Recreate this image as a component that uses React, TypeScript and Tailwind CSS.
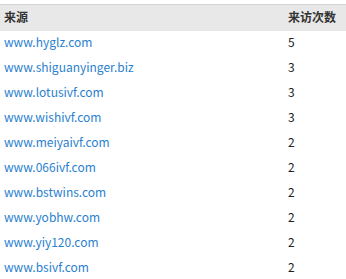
import React from 'react'

const rows = [
  { site: 'www.hyglz.com', count: 5 },
  { site: 'www.shiguanyinger.biz', count: 3 },
  { site: 'www.lotusivf.com', count: 3 },
  { site: 'www.wishivf.com', count: 3 },
  { site: 'www.meiyaivf.com', count: 2 },
  { site: 'www.066ivf.com', count: 2 },
  { site: 'www.bstwins.com', count: 2 },
  { site: 'www.yobhw.com', count: 2 },
  { site: 'www.yiy120.com', count: 2 },
  { site: 'www.bsivf.com', count: 2 },
]

export default function App() {
  return (
    <div
      className="w-[346px] h-[279px] overflow-hidden bg-white pt-1 text-[12px]"
      style={{ fontFamily: '"Noto Sans CJK SC", sans-serif' }}
    >
      <table className="w-full border-collapse">
        <thead>
          <tr className="h-[26px] bg-[#e8e8e8] border-t border-[#d4d4d4] text-[#333]">
            <th className="pl-1 pb-[2px] text-left font-bold">来源</th>
            <th className="w-[58px] pb-[2px] text-left font-bold">来访次数</th>
          </tr>
        </thead>
        <tbody>
          {rows.map((r) => (
            <tr key={r.site} className="h-[25px]">
              <td className="pl-1 pb-[3px] text-[#2a7fcf]">{r.site}</td>
              <td className="pb-[3px] text-[#222]">{r.count}</td>
            </tr>
          ))}
        </tbody>
      </table>
    </div>
  )
}
